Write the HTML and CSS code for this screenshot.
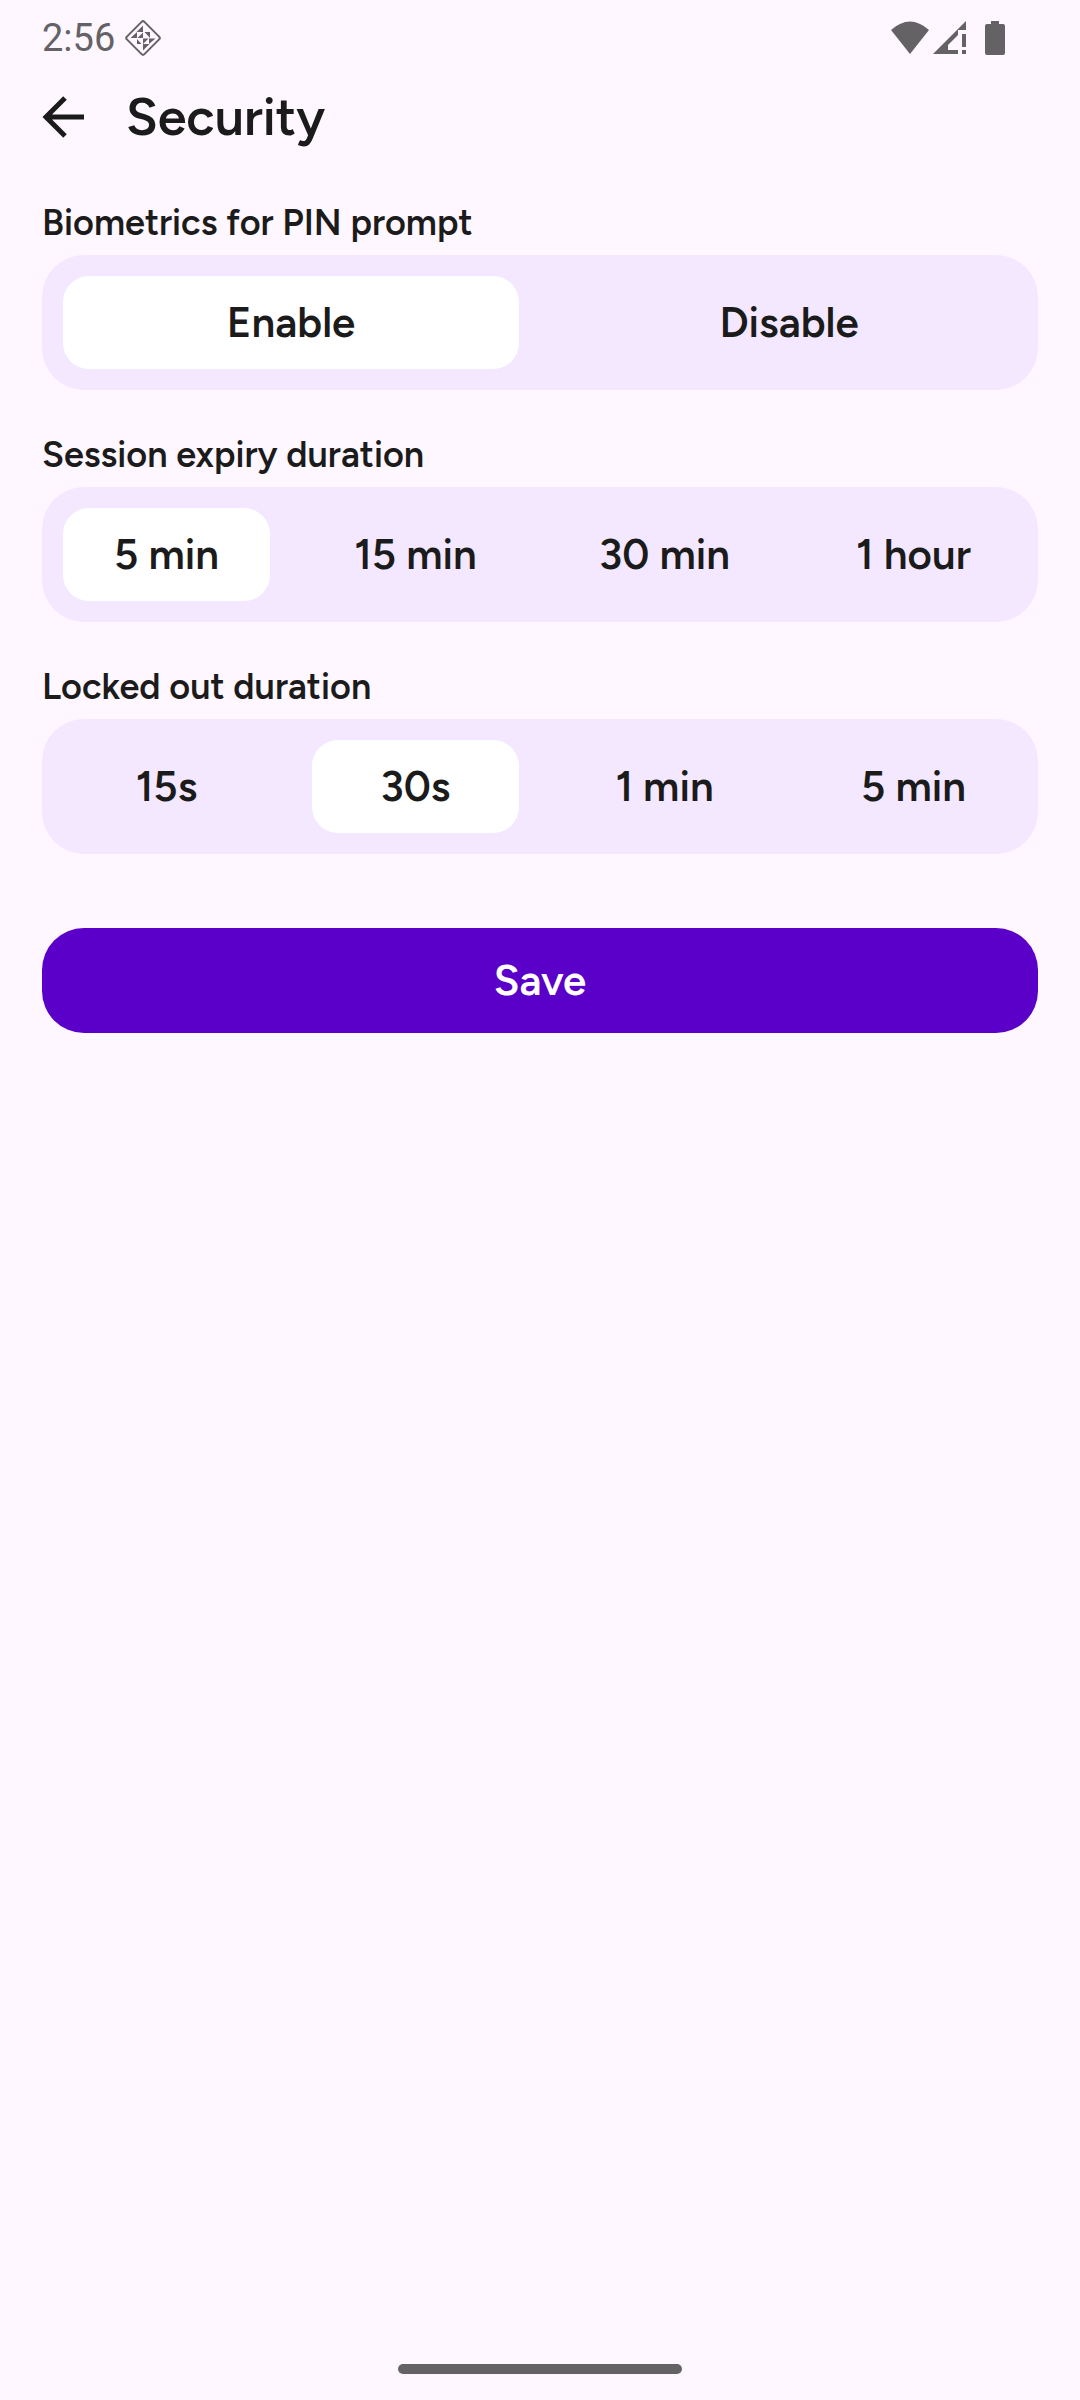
FILE: index.html
```html
<!DOCTYPE html>
<html lang="en">
<head>
<meta charset="utf-8">
<meta name="viewport" content="width=device-width, initial-scale=1">
<title>Security</title>
<link rel="stylesheet" href="styles.css">
</head>
<body>
<div class="screen">
  <div class="status-bar">
    <span class="clock">2:56</span>
    <svg class="app-icon" viewBox="0 0 38 38" width="38" height="38" aria-hidden="true">
      <rect x="6.6" y="6.6" width="24.8" height="24.8" rx="2" transform="rotate(45 19 19)" fill="none" stroke="currentColor" stroke-width="2"/>
      <path fill="currentColor" d="M19 6.500v6.500h-6.500zM6.500 19l6.500-6v6zM20.500 13H26v6zM13.500 19H19v-5.500zM19 31.500V25h6.500zM31.500 19.500L25 25v-5.500zM17.500 25H13v-5zM24.500 19.500H19V25z"/>
    </svg>
    <div class="indicators">
      <svg viewBox="0 0 40 34" width="40" height="34" aria-hidden="true"><path fill="currentColor" d="M1 9Q20-8 39 9L20 33z"/></svg>
      <svg viewBox="0 0 33 34" width="33" height="34" aria-hidden="true"><path fill="currentColor" d="M33 0v9h-8v5L15 24v5h10v4H0zM29 13h4v13h-4zM29 29h4v4h-4z"/></svg>
      <svg class="battery" viewBox="0 0 20 34" width="20" height="34" aria-hidden="true"><path fill="currentColor" d="M6 0h8v3h4q2 0 2 2v27q0 2-2 2H2q-2 0-2-2V5q0-2 2-2h4z"/></svg>
    </div>
  </div>
  <header class="app-bar">
    <button class="back" type="button" aria-label="Back">
      <svg viewBox="0 0 42 42" width="42" height="42" aria-hidden="true"><path fill="none" stroke="currentColor" stroke-width="5" d="M23 2L4 21l19 19M4 21h38"/></svg>
    </button>
    <h1 class="title">Security</h1>
  </header>
  <main>
    <form class="settings">
      <fieldset class="group">
        <legend>Biometrics for PIN prompt</legend>
        <div class="segments">
          <label class="segment"><input type="radio" name="biometrics" checked><span>Enable</span></label>
          <label class="segment"><input type="radio" name="biometrics"><span>Disable</span></label>
        </div>
      </fieldset>
      <fieldset class="group">
        <legend>Session expiry duration</legend>
        <div class="segments">
          <label class="segment"><input type="radio" name="session" checked><span>5 min</span></label>
          <label class="segment"><input type="radio" name="session"><span>15 min</span></label>
          <label class="segment"><input type="radio" name="session"><span>30 min</span></label>
          <label class="segment"><input type="radio" name="session"><span>1 hour</span></label>
        </div>
      </fieldset>
      <fieldset class="group">
        <legend>Locked out duration</legend>
        <div class="segments">
          <label class="segment"><input type="radio" name="lockout"><span>15s</span></label>
          <label class="segment"><input type="radio" name="lockout" checked><span>30s</span></label>
          <label class="segment"><input type="radio" name="lockout"><span>1 min</span></label>
          <label class="segment"><input type="radio" name="lockout"><span>5 min</span></label>
        </div>
      </fieldset>
      <button class="save" type="submit">Save</button>
    </form>
  </main>
  <div class="nav-handle"></div>
</div>
</body>
</html>
```
FILE: styles.css
```css
* {
  box-sizing: border-box;
}

body {
  margin: 0;
  background: #fef7ff;
  color: #1c1b1b;
  font-family: Figtree, Lato, sans-serif;
  font-weight: 600;
}

.screen {
  display: flex;
  flex-direction: column;
  min-height: 100vh;
  padding: 0 42px 26px;
}

.status-bar {
  display: flex;
  align-items: center;
  gap: 9px;
  height: 75px;
  color: #656266;
}

.clock {
  font: 400 38px/44px Roboto, sans-serif;
}

.indicators {
  display: flex;
  gap: 3px;
  margin-left: auto;
  padding-right: 33px;
}

.battery {
  margin-left: 16px;
}

.app-bar {
  display: flex;
  align-items: center;
  gap: 42px;
  height: 84px;
}

.back {
  display: flex;
  padding: 0;
  border: 0;
  background: none;
  color: inherit;
}

.title {
  margin: 0;
  font-size: 52px;
  line-height: 62px;
  font-weight: inherit;
}

.settings {
  display: flex;
  flex-direction: column;
  gap: 43px;
  padding-top: 42px;
}

.group {
  min-width: 0;
  margin: 0;
  padding: 0;
  border: 0;
}

.group legend {
  padding: 0;
  font-size: 36px;
  line-height: 43px;
}

.segments {
  display: grid;
  grid-auto-flow: column;
  grid-auto-columns: 1fr;
  gap: 42px;
  margin-top: 11px;
  padding: 21px;
  border-radius: 42px;
  background: #f3e8ff;
}

.segment {
  position: relative;
  display: flex;
  align-items: center;
  justify-content: center;
  height: 93px;
  border-radius: 26px;
  font-size: 42px;
  line-height: 50px;
}

.segment input {
  position: absolute;
  inset: 0;
  width: 100%;
  height: 100%;
  margin: 0;
  opacity: 0;
}

.segment:has(input:checked) {
  background: #fff;
}

.save {
  height: 105px;
  margin-top: 31px;
  border: 0;
  border-radius: 42px;
  background: #5a00c8;
  color: #fff;
  font: inherit;
  font-size: 42px;
  line-height: 50px;
}

.nav-handle {
  width: 284px;
  height: 10px;
  margin: auto auto 0;
  border-radius: 5px;
  background: #656266;
}
```
